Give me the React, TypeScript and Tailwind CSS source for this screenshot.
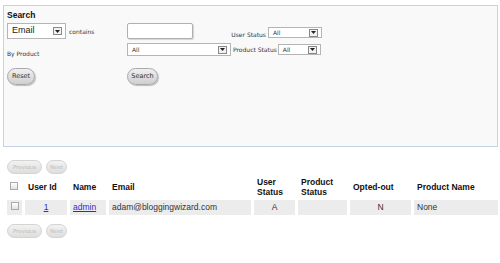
import React from 'react';

const small = "font-['DejaVu_Sans',sans-serif] text-[6px] text-[#333]";

const Arrow = () => (
  <span className="w-[9px] h-[8px] border border-[#888] bg-[#f2f2f2] flex items-center justify-center shrink-0">
    <svg width="5" height="3" viewBox="0 0 5 3"><polygon points="0,0 5,0 2.5,3" fill="#222" /></svg>
  </span>
);

const Select = ({ w, h, label, big }: { w: string; h: string; label: string; big?: boolean }) => (
  <div className={`${w} ${h} bg-white border border-[#b5b5b5] flex items-center justify-between pl-[4px] pr-[3px]`}>
    <span className={big ? "font-['Liberation_Sans',sans-serif] text-[9px] text-[#222]" : small}>{label}</span>
    <Arrow />
  </div>
);

const Pill = ({ label, w, disabled }: { label: string; w: string; disabled?: boolean }) => (
  <button
    className={`${w} rounded-full border flex items-center justify-center font-['DejaVu_Sans',sans-serif] ${
      disabled
        ? 'h-[14px] text-[5.5px] border-[#d4d4d4] bg-gradient-to-b from-[#f2f2f2] to-[#dedede] text-[#bdbdbd]'
        : 'h-[17px] text-[6.5px] border-[#a9a9a9] bg-gradient-to-b from-[#f0f0f0] to-[#cfcfcf] text-[#333] shadow-[1px_1px_1px_rgba(0,0,0,0.25)]'
    }`}
  >
    {label}
  </button>
);

const Check = () => (
  <span className="inline-block w-[8px] h-[8px] border border-[#aaa] bg-gradient-to-b from-[#fff] to-[#e2e2e2]" />
);

const cols = ['w-[15px]', 'w-[42px]', 'w-[36px]', 'w-[142px]', 'w-[41px]', 'w-[49px]', 'w-[61px]', 'w-[84px]'];

export default function App() {
  const th = "font-['Liberation_Sans',sans-serif] text-[8.5px] font-bold text-[#111] text-left align-middle leading-[10px] px-[3px]";
  const td = "bg-[#ececec] h-[15px] font-['Liberation_Sans',sans-serif] text-[8.5px] text-[#333] px-[3px] align-middle";
  return (
    <div className="w-[500px] h-[263px] bg-white overflow-hidden relative">
      <div className="ml-[3px] mt-[5px] w-[495px] h-[142px] border border-[#c3d2e6] bg-[#f9f9f9] pl-[3px] pt-[4px]">
        <div className="font-['Liberation_Sans',sans-serif] text-[8.5px] font-bold text-[#111] leading-[10px]">Search</div>
        <div className="flex items-center mt-[3px] h-[16px]">
          <div className="w-[120px] flex items-center">
            <Select w="w-[59px]" h="h-[16px]" label="Email" big />
            <span className={`${small} ml-[3px]`}>contains</span>
          </div>
          <div className="w-[66px] h-[16px] bg-white border border-[#b0b0b0] rounded-[2px] shadow-[1px_1px_1px_rgba(0,0,0,0.15)]" />
          <div className="w-[73px] text-right">
            <span className={small}>User Status</span>
          </div>
          <div className="ml-[2px] mt-[3px]">
            <Select w="w-[54px]" h="h-[11px]" label="All" />
          </div>
        </div>
        <div className="flex items-center mt-[4px] h-[13px]">
          <div className="w-[120px]">
            <span className={small}>By Product</span>
          </div>
          <Select w="w-[104px]" h="h-[13px]" label="All" />
          <span className={`${small} ml-[2px] mr-[1px]`}>Product Status</span>
          <Select w="w-[43px]" h="h-[11px]" label="All" />
        </div>
        <div className="flex items-center mt-[12px]">
          <div className="w-[120px]">
            <Pill label="Reset" w="w-[28px]" />
          </div>
          <Pill label="Search" w="w-[31px]" />
        </div>
      </div>

      <div className="flex gap-[4px] ml-[7px] mt-[13px]">
        <Pill label="Previous" w="w-[35px]" disabled />
        <Pill label="Next" w="w-[21px]" disabled />
      </div>

      <table className="table-fixed w-[510px] border-separate border-spacing-[3px] ml-[4px]">
        <thead>
          <tr className="h-[18px]">
            <th className={`${cols[0]} ${th} text-center`}><Check /></th>
            <th className={`${cols[1]} ${th}`}>User Id</th>
            <th className={`${cols[2]} ${th}`}>Name</th>
            <th className={`${cols[3]} ${th}`}>Email</th>
            <th className={`${cols[4]} ${th}`}>User<br />Status</th>
            <th className={`${cols[5]} ${th}`}>Product<br />Status</th>
            <th className={`${cols[6]} ${th}`}>Opted-out</th>
            <th className={`${cols[7]} ${th}`}>Product Name</th>
            <th className={`w-[10px] ${th}`}></th>
          </tr>
        </thead>
        <tbody>
          <tr>
            <td className={`${td} text-center`}><Check /></td>
            <td className={`${td} text-center`}><a className="text-[#2b2bd6] underline">1</a></td>
            <td className={td}><a className="text-[#2b2bd6] underline">admin</a></td>
            <td className={td}>adam@bloggingwizard.com</td>
            <td className={`${td} text-center`}>A</td>
            <td className={td}></td>
            <td className={`${td} text-center`}>N</td>
            <td className={td}>None</td>
            <td className={td}></td>
          </tr>
        </tbody>
      </table>

      <div className="flex gap-[4px] ml-[7px] mt-[6px]">
        <Pill label="Previous" w="w-[35px]" disabled />
        <Pill label="Next" w="w-[21px]" disabled />
      </div>
    </div>
  );
}
